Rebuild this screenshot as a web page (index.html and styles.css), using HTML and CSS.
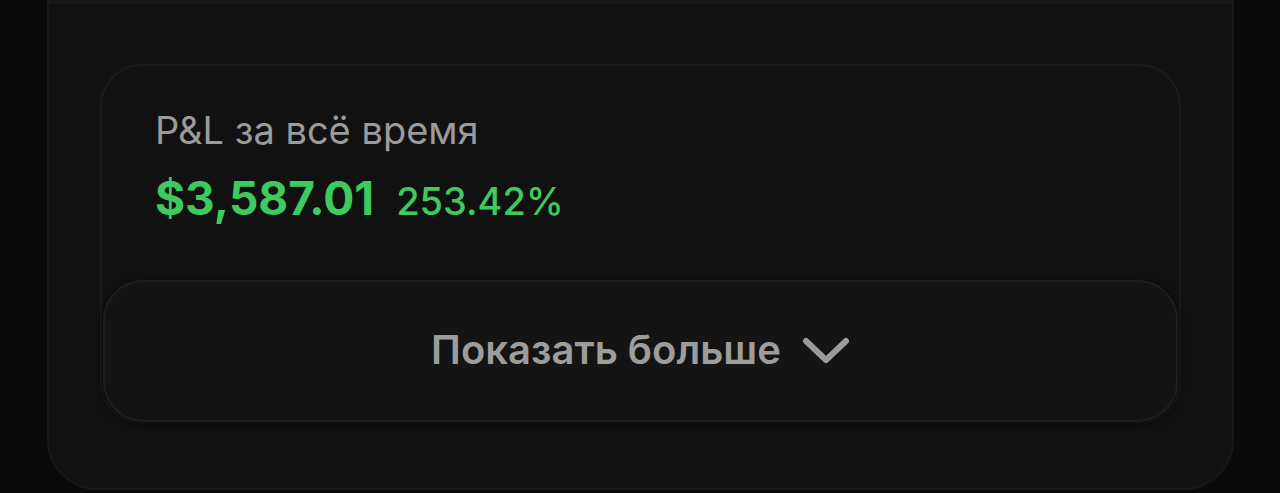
FILE: index.html
```html
<!DOCTYPE html>
<html lang="ru">
<head>
    <meta charset="UTF-8">
    <meta name="viewport" content="width=device-width, initial-scale=1.0">
    <title>P&amp;L</title>
    <link rel="stylesheet" href="styles.css">
</head>
<body>

    <div class="panel">
        <div class="pnl-card">
            <div class="pnl-label">P&amp;L за всё время</div>
            <div class="pnl-values">
                <span class="pnl-amount">$3,587.01</span>
                <span class="pnl-percent">253.42%</span>
            </div>
            <button class="more-btn">
                <span>Показать больше</span>
                <svg class="chevron" width="48" height="28" viewBox="0 0 48 28">
                    <path d="M4 4 L24 23 L44 4" fill="none" stroke="#9b9b9b" stroke-width="6" stroke-linecap="round" stroke-linejoin="round"/>
                </svg>
            </button>
        </div>
    </div>

</body>
</html>
```

FILE: styles.css
```css
html, body {
    margin: 0;
    height: 100%;
}
body {
    background-color: #0a0a0a;
    font-family: Inter, "Noto Sans", sans-serif;
    overflow: hidden;
}
.panel {
    margin: 0 46px 0 47px;
    height: 490px;
    box-sizing: border-box;
    background-color: #111111;
    border: 2px solid #181818;
    border-top: none;
    border-radius: 0 0 50px 50px;
    box-shadow: inset 0 4px 0 #171717;
    padding: 64px 51px 0 51px;
}
.pnl-card {
    display: flex;
    flex-direction: column;
    height: 360px;
    box-sizing: border-box;
    border: 2px solid #1b1b1b;
    border-radius: 42px;
    padding: 41px 1px 0 1px;
}
.pnl-label {
    color: #9b9b9b;
    font-size: 38px;
    line-height: 46px;
    padding-left: 52px;
}
.pnl-values {
    display: flex;
    align-items: baseline;
    gap: 22px;
    margin-top: 19px;
    padding-left: 52px;
    color: #3fca5f;
    line-height: 52px;
}
.pnl-amount {
    font-size: 46px;
    font-weight: 700;
}
.pnl-percent {
    font-size: 38px;
    font-weight: 500;
}
.more-btn {
    margin-top: auto;
    height: 142px;
    display: flex;
    align-items: center;
    justify-content: center;
    gap: 21px;
    background-color: #141414;
    border: 2px solid #1e1e1e;
    border-radius: 40px;
    box-shadow: 0 2px 10px rgba(0, 0, 0, 0.55);
    color: #9d9d9d;
    font-family: Inter, "Noto Sans", sans-serif;
    font-size: 40px;
    font-weight: 600;
    padding: 0 0 4px 0;
    cursor: pointer;
}
.chevron {
    display: block;
    margin-top: 4px;
}
```
